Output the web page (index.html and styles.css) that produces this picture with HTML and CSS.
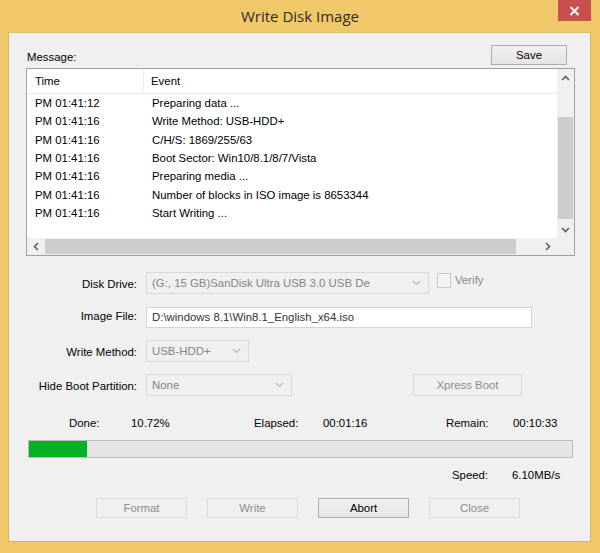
FILE: index.html
```html
<!doctype html>
<html lang="en">
<head>
  <meta charset="utf-8">
  <title>Write Disk Image</title>
  <link rel="stylesheet" href="styles.css">
</head>

<body>
  <div class="window">
    <div class="titlebar">
      <span class="title">Write Disk Image</span>
      <span class="close-btn">
        <svg width="11" height="10" viewBox="0 0 11 10"><path d="M1.5 1 L9.5 9 M9.5 1 L1.5 9" stroke="#fff" stroke-width="2"/></svg>
      </span>
    </div>

    <div class="client">
      <!-- Message log -->
      <div class="top-row">
        <span class="msg-label">Message:</span>
        <button class="btn save-btn">Save</button>
      </div>

      <div class="listbox">
        <div class="list-main">
          <div class="list-content">
            <div class="list-head">
              <span class="col-time head-time">Time</span>
              <span class="col-event">Event</span>
            </div>
            <div class="list-row"><span class="col-time">PM 01:41:12</span><span class="col-event">Preparing data ...</span></div>
            <div class="list-row"><span class="col-time">PM 01:41:16</span><span class="col-event">Write Method: USB-HDD+</span></div>
            <div class="list-row"><span class="col-time">PM 01:41:16</span><span class="col-event">C/H/S: 1869/255/63</span></div>
            <div class="list-row"><span class="col-time">PM 01:41:16</span><span class="col-event">Boot Sector: Win10/8.1/8/7/Vista</span></div>
            <div class="list-row"><span class="col-time">PM 01:41:16</span><span class="col-event">Preparing media ...</span></div>
            <div class="list-row"><span class="col-time">PM 01:41:16</span><span class="col-event">Number of blocks in ISO image is 8653344</span></div>
            <div class="list-row"><span class="col-time">PM 01:41:16</span><span class="col-event">Start Writing ...</span></div>
          </div>
          <div class="vscroll">
            <span class="arrow">
              <svg width="9" height="6" viewBox="0 0 9 6"><path d="M1 5 L4.5 1.5 L8 5" fill="none" stroke="#606060" stroke-width="1.6"/></svg>
            </span>
            <span class="vtrack"><span class="vthumb"></span></span>
            <span class="arrow">
              <svg width="9" height="6" viewBox="0 0 9 6"><path d="M1 1 L4.5 4.5 L8 1" fill="none" stroke="#606060" stroke-width="1.6"/></svg>
            </span>
          </div>
        </div>
        <div class="hscroll">
          <span class="harrow">
            <svg width="6" height="9" viewBox="0 0 6 9"><path d="M5 1 L1.5 4.5 L5 8" fill="none" stroke="#606060" stroke-width="1.6"/></svg>
          </span>
          <span class="hthumb"></span>
          <span class="htrack"></span>
          <span class="harrow">
            <svg width="6" height="9" viewBox="0 0 6 9"><path d="M1 1 L4.5 4.5 L1 8" fill="none" stroke="#606060" stroke-width="1.6"/></svg>
          </span>
          <span class="corner"></span>
        </div>
      </div>

      <!-- Options -->
      <div class="form">
        <label class="label">Disk Drive:</label>
        <div class="field">
          <div class="select disabled w-drive">
            <span>(G:, 15 GB)SanDisk Ultra USB 3.0 USB De</span>
            <svg width="9" height="6" viewBox="0 0 9 6"><path d="M1 1 L4.5 4.5 L8 1" fill="none" stroke="#b8b8b8" stroke-width="1.2"/></svg>
          </div>
          <span class="check"></span>
          <span class="check-label">Verify</span>
        </div>

        <label class="label lbl-image">Image File:</label>
        <div class="field">
          <div class="textbox">D:\windows 8.1\Win8.1_English_x64.iso</div>
        </div>

        <label class="label">Write Method:</label>
        <div class="field">
          <div class="select disabled w-method">
            <span>USB-HDD+</span>
            <svg width="9" height="6" viewBox="0 0 9 6"><path d="M1 1 L4.5 4.5 L8 1" fill="none" stroke="#b8b8b8" stroke-width="1.2"/></svg>
          </div>
        </div>

        <label class="label">Hide Boot Partition:</label>
        <div class="field">
          <div class="select disabled w-hide">
            <span>None</span>
            <svg width="9" height="6" viewBox="0 0 9 6"><path d="M1 1 L4.5 4.5 L8 1" fill="none" stroke="#b8b8b8" stroke-width="1.2"/></svg>
          </div>
          <button class="btn xpress-btn" disabled>Xpress Boot</button>
        </div>
      </div>

      <!-- Progress -->
      <div class="stats">
        <span>Done:</span>
        <span>10.72%</span>
        <span>Elapsed:</span>
        <span>00:01:16</span>
        <span>Remain:</span>
        <span>00:10:33</span>
      </div>

      <div class="progress">
        <div class="progress-fill" style="width: 10.72%"></div>
      </div>

      <div class="speed">
        <span class="speed-label">Speed:</span>
        <span>6.10MB/s</span>
      </div>

      <div class="actions">
        <button class="btn action" disabled>Format</button>
        <button class="btn action" disabled>Write</button>
        <button class="btn action">Abort</button>
        <button class="btn action" disabled>Close</button>
      </div>
    </div>
  </div>
</body>
</html>
```

FILE: styles.css
```css
* {
  box-sizing: border-box;
}

body {
  margin: 0;
  font-family: 'Liberation Sans', Arial, sans-serif;
  font-size: 11.4px;
  color: #000;
  background: #f1c869;
}

.window {
  width: 600px;
  height: 553px;
  background: #f1c869;
  display: flex;
  flex-direction: column;
}

.titlebar {
  position: relative;
  height: 32px;
  display: flex;
  justify-content: center;
}

.title {
  font-family: 'Open Sans', 'Noto Sans', sans-serif;
  font-size: 15px;
  color: #2b2b2b;
  line-height: 32px;
  margin-left: 0;
}

.close-btn {
  position: absolute;
  top: 0;
  right: 9px;
  width: 33px;
  height: 21px;
  background: #c7504f;
  display: flex;
  align-items: center;
  justify-content: center;
}

.client {
  margin: 0 9px 0 8px;
  height: 510px;
  background: #f0f0f0;
  border: 1px solid #d8b45c;
  border-top-color: #dcbd6c;
  padding: 11px 15px 0 17px;
}

.top-row {
  display: flex;
  justify-content: space-between;
  align-items: flex-end;
  height: 21px;
  margin-bottom: 3px;
}

.msg-label {
  line-height: 14px;
  margin-left: 1px;
  margin-bottom: 1px;
}

.btn {
  font-family: 'Liberation Sans', Arial, sans-serif;
  font-size: 11.4px;
  color: #000;
  height: 20px;
  padding: 0;
  border: 1px solid #adadad;
  background: linear-gradient(#f0f0f0, #e5e5e5);
}

.btn:disabled {
  color: #8c8c8c;
  border-color: #d9d9d9;
  background: #f0f0f0;
}

.save-btn {
  width: 76px;
  margin-right: 8px;
}

.listbox {
  width: 549px;
  height: 188px;
  border: 1px solid #a0a0a0;
  background: #fff;
  display: flex;
  flex-direction: column;
}

.list-main {
  flex: 1;
  display: flex;
  min-height: 0;
}

.list-content {
  flex: 1;
  overflow: hidden;
}

.list-head {
  height: 25px;
  display: flex;
  align-items: center;
  border-bottom: 1px solid #e8ebef;
}

.list-row {
  height: 18.3px;
  display: flex;
  align-items: center;
}

.col-time {
  width: 117px;
  padding-left: 8px;
}

.head-time {
  height: 24px;
  line-height: 24px;
  border-right: 1px solid #eceef2;
}

.col-event {
  padding-left: 8px;
  white-space: nowrap;
}

.list-head .col-event {
  padding-left: 7px;
}

.vscroll {
  width: 17px;
  background: #f0f0f0;
  display: flex;
  flex-direction: column;
}

.arrow {
  height: 17px;
  display: flex;
  align-items: center;
  justify-content: center;
}

.vtrack {
  flex: 1;
  display: flex;
  flex-direction: column;
  justify-content: flex-end;
  padding: 0 1px 2px;
}

.vthumb {
  height: 102px;
  background: #cdcdcd;
}

.hscroll {
  height: 17px;
  display: flex;
  background: #f0f0f0;
}

.harrow {
  width: 18px;
  display: flex;
  align-items: center;
  justify-content: center;
}

.hthumb {
  width: 471px;
  margin: 1px 0;
  background: #cdcdcd;
}

.htrack {
  flex: 1;
}

.corner {
  width: 17px;
  background: #f0f0f0;
}

.form {
  display: grid;
  grid-template-columns: 111px auto;
  column-gap: 9px;
  row-gap: 12px;
  margin-top: 16px;
}

.label {
  text-align: right;
  line-height: 22px;
  position: relative;
  top: 1px;
}

.lbl-image {
  top: -1px;
}

.field {
  height: 22px;
  display: flex;
  align-items: center;
}

.select {
  height: 22px;
  display: flex;
  align-items: center;
  justify-content: space-between;
  padding: 0 7px 0 5px;
  border: 1px solid #d9d9d9;
  background: #f0f0f0;
  color: #838383;
}

.w-drive {
  width: 283px;
}

.w-method {
  width: 103px;
}

.w-hide {
  width: 146px;
}

.check {
  width: 14px;
  height: 15px;
  margin-left: 8px;
  margin-top: -5px;
  border: 1px solid #c9c9c9;
  background: #f4f4f4;
}

.check-label {
  margin-left: 4px;
  margin-top: -6px;
  color: #8a8a8a;
}

.textbox {
  width: 386px;
  height: 21px;
  line-height: 19px;
  padding-left: 5px;
  border: 1px solid #d4d4d4;
  background: #fff;
  color: #333;
}

.xpress-btn {
  width: 109px;
  height: 22px;
  margin-left: 121px;
}

.stats {
  display: grid;
  grid-template-columns: 62px 123px 69px 123px 67px auto;
  padding-left: 43px;
  margin-top: 20px;
  line-height: 14px;
}

.progress {
  width: 545px;
  height: 18px;
  margin: 10px 0 0 2px;
  border: 1px solid #bcbcbc;
  background: #e6e6e6;
}

.progress-fill {
  height: 100%;
  background: #06b025;
}

.speed {
  display: flex;
  line-height: 14px;
  margin-top: 10px;
  padding-left: 426px;
}

.speed-label {
  width: 60px;
}

.actions {
  display: flex;
  gap: 20px;
  margin-top: 16px;
  padding-left: 70px;
}

.action {
  width: 91px;
}
```
